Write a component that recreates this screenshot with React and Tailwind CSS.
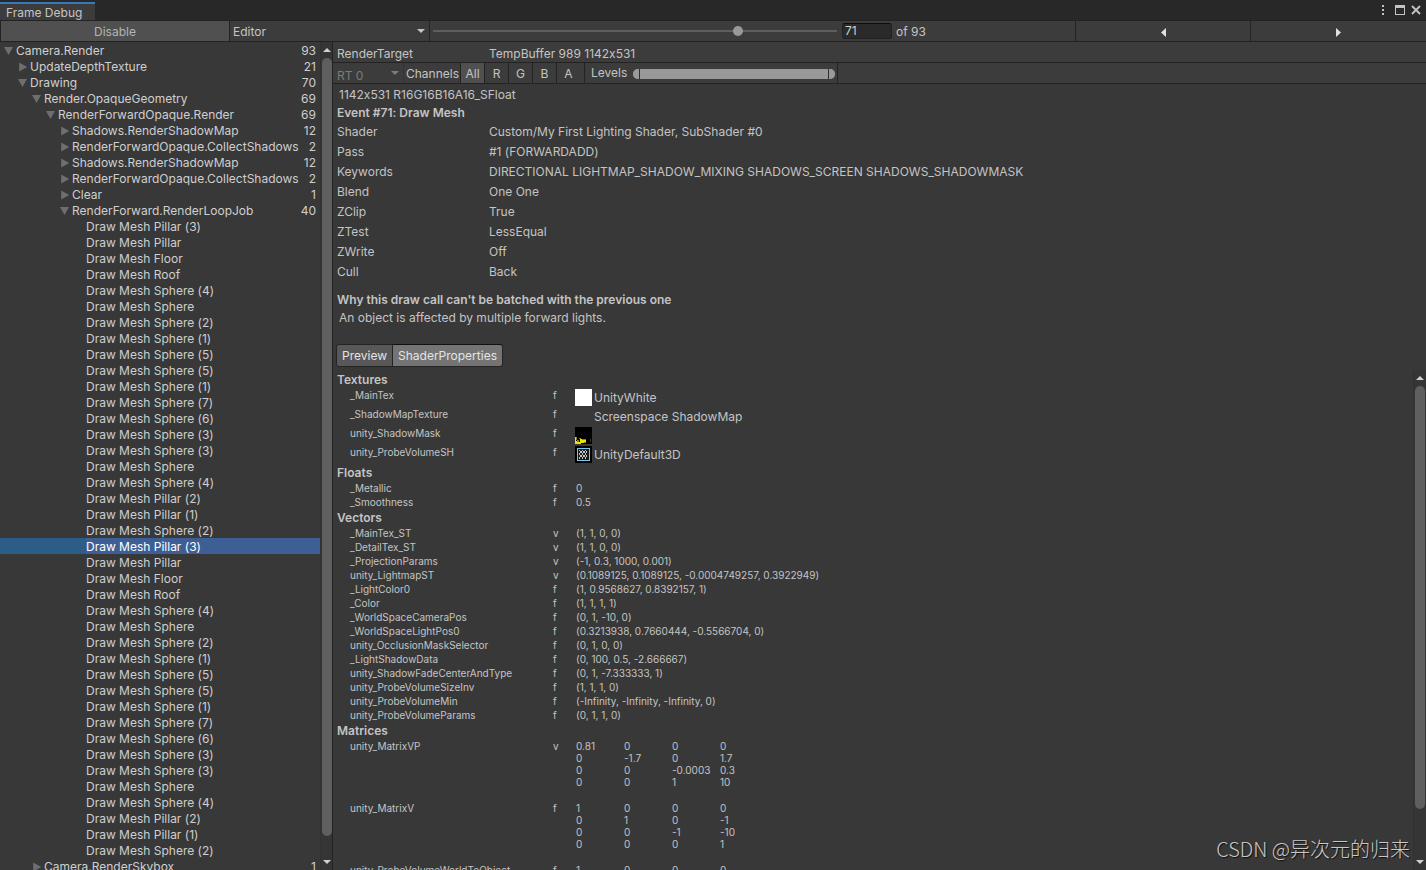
import { useState } from 'react'

const meshes = [
  'Pillar (3)', 'Pillar', 'Floor', 'Roof', 'Sphere (4)', 'Sphere', 'Sphere (2)', 'Sphere (1)',
  'Sphere (5)', 'Sphere (5)', 'Sphere (1)', 'Sphere (7)', 'Sphere (6)', 'Sphere (3)', 'Sphere (3)',
  'Sphere', 'Sphere (4)', 'Pillar (2)', 'Pillar (1)', 'Sphere (2)',
]

// every mesh is drawn twice, once per light
const draws = [...meshes, ...meshes].map(name => ({ depth: 5, label: `Draw Mesh ${name}` }))

const tree = [
  { depth: 0, label: 'Camera.Render', count: 93, open: true },
  { depth: 1, label: 'UpdateDepthTexture', count: 21, open: false },
  { depth: 1, label: 'Drawing', count: 70, open: true },
  { depth: 2, label: 'Render.OpaqueGeometry', count: 69, open: true },
  { depth: 3, label: 'RenderForwardOpaque.Render', count: 69, open: true },
  { depth: 4, label: 'Shadows.RenderShadowMap', count: 12, open: false },
  { depth: 4, label: 'RenderForwardOpaque.CollectShadows', count: 2, open: false },
  { depth: 4, label: 'Shadows.RenderShadowMap', count: 12, open: false },
  { depth: 4, label: 'RenderForwardOpaque.CollectShadows', count: 2, open: false },
  { depth: 4, label: 'Clear', count: 1, open: false },
  { depth: 4, label: 'RenderForward.RenderLoopJob', count: 40, open: true },
  ...draws,
  { depth: 2, label: 'Camera.RenderSkybox', count: 1, open: false },
]

const details = [
  ['Shader', 'Custom/My First Lighting Shader, SubShader #0'],
  ['Pass', '#1 (FORWARDADD)'],
  ['Keywords', 'DIRECTIONAL LIGHTMAP_SHADOW_MIXING SHADOWS_SCREEN SHADOWS_SHADOWMASK'],
  ['Blend', 'One One'],
  ['ZClip', 'True'],
  ['ZTest', 'LessEqual'],
  ['ZWrite', 'Off'],
  ['Cull', 'Back'],
]

const textures = [
  { name: '_MainTex', icon: 'white', value: 'UnityWhite' },
  { name: '_ShadowMapTexture', icon: 'none', value: 'Screenspace ShadowMap' },
  { name: 'unity_ShadowMask', icon: 'mask', value: '' },
  { name: 'unity_ProbeVolumeSH', icon: 'volume', value: 'UnityDefault3D' },
]

const floats = [
  ['_Metallic', 'f', '0'],
  ['_Smoothness', 'f', '0.5'],
]

const vectors = [
  ['_MainTex_ST', 'v', '(1, 1, 0, 0)'],
  ['_DetailTex_ST', 'v', '(1, 1, 0, 0)'],
  ['_ProjectionParams', 'v', '(-1, 0.3, 1000, 0.001)'],
  ['unity_LightmapST', 'v', '(0.1089125, 0.1089125, -0.0004749257, 0.3922949)'],
  ['_LightColor0', 'f', '(1, 0.9568627, 0.8392157, 1)'],
  ['_Color', 'f', '(1, 1, 1, 1)'],
  ['_WorldSpaceCameraPos', 'f', '(0, 1, -10, 0)'],
  ['_WorldSpaceLightPos0', 'f', '(0.3213938, 0.7660444, -0.5566704, 0)'],
  ['unity_OcclusionMaskSelector', 'f', '(0, 1, 0, 0)'],
  ['_LightShadowData', 'f', '(0, 100, 0.5, -2.666667)'],
  ['unity_ShadowFadeCenterAndType', 'f', '(0, 1, -7.333333, 1)'],
  ['unity_ProbeVolumeSizeInv', 'f', '(1, 1, 1, 0)'],
  ['unity_ProbeVolumeMin', 'f', '(-Infinity, -Infinity, -Infinity, 0)'],
  ['unity_ProbeVolumeParams', 'f', '(0, 1, 1, 0)'],
]

const matrices = [
  { name: 'unity_MatrixVP', type: 'v', cells: ['0.81', '0', '0', '0', '0', '-1.7', '0', '1.7', '0', '0', '-0.0003', '0.3', '0', '0', '1', '10'] },
  { name: 'unity_MatrixV', type: 'f', cells: ['1', '0', '0', '0', '0', '1', '0', '-1', '0', '0', '-1', '-10', '0', '0', '0', '1'] },
  { name: 'unity_ProbeVolumeWorldToObject', type: 'f', cells: ['1', '0', '0', '0'] },
]

function Caret({ className }) {
  return (
    <svg viewBox="0 0 8 4" className={`w-2 h-1 fill-current ${className}`} aria-hidden="true">
      <path d="M0 0h8L4 4z" />
    </svg>
  )
}

function Foldout({ open }) {
  return (
    <svg viewBox="0 0 14 16" className="w-3.5 h-4 shrink-0 fill-[#6e6e6e]" aria-hidden="true">
      {open ? <path d="M2 5h9l-4.5 8z" /> : <path d="M3.2 4.5v9l8-4.5z" />}
    </svg>
  )
}

function Scrollbar({ size, className }) {
  return (
    <div className={`flex flex-col shrink-0 pl-px bg-[#353535] border-l border-[#323232] ${className}`}>
      <div className="h-4 flex items-center justify-center text-[#d0d0d0]"><Caret className="rotate-180" /></div>
      <div className="flex-1 min-h-0">
        <div className="rounded-full bg-[#5f5f5f]" style={{ height: size }} />
      </div>
      <div className="h-4 flex items-center justify-center text-[#d0d0d0]"><Caret /></div>
    </div>
  )
}

function TextureIcon({ kind }) {
  if (kind === 'white') return <span className="size-[17px] bg-white" />
  if (kind === 'mask') {
    return (
      <svg viewBox="0 0 17 17" className="size-[17px]" aria-hidden="true">
        <rect width="17" height="17" fill="#000" />
        <path d="M0 10h1v4h1v1h3v-3h2v1h4v2H9v1H6v1H0z" fill="#e6e600" />
        <path d="M1 10h1v3H1zM4 11h2v1H4zM7 12h4v1H7zM9 15h2v1H9zM2 13h2v2H2z" fill="#8a8a00" />
        <path d="M15 12h1v3h-1z" fill="#3a3a00" />
      </svg>
    )
  }
  if (kind === 'volume') {
    return (
      <svg viewBox="0 0 17 17" className="size-[17px]" aria-hidden="true">
        <rect width="17" height="17" fill="#000" />
        <rect x="2.5" y="2.5" width="12" height="12" fill="#1a1a1a" stroke="#7cc4ec" />
        <path
          d="M4 4h1v1H4zM7 4h1v1H7zM10 4h1v1h-1zM5 5h2v2H5zM8 5h2v2H8zM11 5h1v2h-1zM4 7h1v2H4zM7 7h1v2H7zM10 7h1v2h-1zM5 9h2v2H5zM8 9h2v2H8zM11 9h1v2h-1zM4 11h1v2H4zM7 11h1v2H7zM10 11h1v2h-1z"
          fill="#c8c8c8"
        />
      </svg>
    )
  }
  return <span className="size-[17px]" />
}

function PropertyTable({ title, children }) {
  return (
    <table className="w-full table-fixed text-left text-[10px] leading-[14px]">
      <caption className="text-left pl-1 h-[17px] text-xs leading-[17px] font-semibold">{title}</caption>
      <colgroup>
        <col className="w-[220px]" />
        <col className="w-[23px]" />
        <col />
      </colgroup>
      <tbody>{children}</tbody>
    </table>
  )
}

function ValueRows({ rows }) {
  return rows.map(([name, type, value]) => (
    <tr key={name}>
      <th scope="row" className="pl-[17px] font-normal">{name}</th>
      <td>{type}</td>
      <td>{value}</td>
    </tr>
  ))
}

function TitleBar() {
  return (
    <header className="flex h-5 bg-[#282828]">
      <h1 className="mt-0.5 w-[95px] pl-1.5 border-t-2 border-[#3a79bb] bg-[#3c3c3c] leading-[18px]">Frame Debug</h1>
      <div className="ml-auto flex items-center gap-1.5 pr-[5px] text-[#c4c4c4]">
        <button aria-label="Menu" className="w-3 flex justify-center">
          <svg viewBox="0 0 2 10" className="w-0.5 h-2.5 fill-current"><path d="M0 0h2v2H0zM0 4h2v2H0zM0 8h2v2H0z" /></svg>
        </button>
        <button aria-label="Maximize">
          <svg viewBox="0 0 10 10" className="size-2.5 fill-current"><path d="M0 0h10v10H0zM1 3v6h8V3z" fillRule="evenodd" /></svg>
        </button>
        <button aria-label="Close">
          <svg viewBox="0 0 10 10" className="size-2.5 stroke-current"><path d="M1 1l8 8M9 1L1 9" strokeWidth="1.8" /></svg>
        </button>
      </div>
    </header>
  )
}

function Toolbar({ frame, setFrame }) {
  return (
    <div className="flex h-[22px] border-y border-[#232323] bg-[#3c3c3c]">
      <button className="w-[230px] pt-0.5 border-x border-[#232323] bg-[#505050] text-[#b4b4b4]">Disable</button>
      <div className="relative w-[200px] border-r border-[#232323]">
        <select aria-label="Connection" className="w-full h-full pt-0.5 pl-[3px] appearance-none outline-none">
          <option>Editor</option>
        </select>
        <Caret className="absolute right-1 top-2 pointer-events-none" />
      </div>
      <input
        type="range"
        aria-label="Event"
        min="1"
        max="93"
        value={frame}
        onChange={e => setFrame(Number(e.target.value))}
        className="w-[404px] ml-[3px] appearance-none bg-transparent
                   [&::-webkit-slider-runnable-track]:h-0.5 [&::-webkit-slider-runnable-track]:bg-[#5e5e5e]
                   [&::-webkit-slider-thumb]:appearance-none [&::-webkit-slider-thumb]:size-2.5 [&::-webkit-slider-thumb]:-mt-1
                   [&::-webkit-slider-thumb]:rounded-full [&::-webkit-slider-thumb]:bg-[#999999]"
      />
      <input
        type="text"
        id="event-number"
        value={frame}
        onChange={e => setFrame(Number(e.target.value) || 1)}
        className="ml-[5px] mt-0.5 w-[50px] h-4 px-0.5 rounded-[3px] border border-[#212121] border-t-[#0d0d0d] bg-[#2a2a2a] text-[#d2d2d2]"
      />
      <label htmlFor="event-number" className="ml-1 leading-[22px]">of 93</label>
      <button
        aria-label="Previous event"
        onClick={() => setFrame(Math.max(1, frame - 1))}
        className="ml-auto w-[175px] pt-0.5 flex items-center justify-center border-l border-[#232323]"
      >
        <svg viewBox="0 0 5 9" className="w-[5px] h-[9px] fill-[#e0e0e0]"><path d="M5 0v9L0 4.5z" /></svg>
      </button>
      <button
        aria-label="Next event"
        onClick={() => setFrame(Math.min(93, frame + 1))}
        className="w-44 pt-0.5 flex items-center justify-center border-l border-[#232323]"
      >
        <svg viewBox="0 0 5 9" className="w-[5px] h-[9px] fill-[#e0e0e0]"><path d="M0 0v9l5-4.5z" /></svg>
      </button>
    </div>
  )
}

function EventTree() {
  const [selected, setSelected] = useState(31)

  return (
    <ul role="tree" className="flex-1 min-w-0 overflow-hidden text-[#cfcfcf]">
      {tree.map((row, i) => (
        <li
          key={i}
          role="treeitem"
          aria-selected={i === selected}
          onClick={() => setSelected(i)}
          className={`flex h-4 leading-[18px] whitespace-nowrap ${i === selected ? 'bg-[#2c5d87] text-white' : ''}`}
          style={{ paddingLeft: 2 + row.depth * 14 }}
        >
          {row.count ? <Foldout open={row.open} /> : <span className="w-3.5" />}
          <span className={`flex-1 ${i === selected ? 'bg-[#3e5f96]' : ''}`}>{row.label}</span>
          {row.count && <span className="pr-1">{row.count}</span>}
        </li>
      ))}
    </ul>
  )
}

function ChannelBar() {
  const [channel, setChannel] = useState('All')
  const [levels, setLevels] = useState([0, 1])
  const rangeClass = "absolute inset-0 w-full h-full appearance-none bg-transparent pointer-events-none [&::-webkit-slider-thumb]:appearance-none [&::-webkit-slider-thumb]:pointer-events-auto [&::-webkit-slider-thumb]:w-[7px] [&::-webkit-slider-thumb]:h-2.5 [&::-webkit-slider-thumb]:bg-[#999999] [&::-webkit-slider-thumb]:border-[#303030]"

  return (
    <div className="flex h-[21px] border-b border-[#232323] bg-[#3c3c3c] leading-[22px]">
      <div className="relative w-[71px] border-r border-[#353535] text-[#7b7b7b]">
        <select aria-label="Render target" disabled className="w-full h-full pl-1 pt-0.5 appearance-none">
          <option>RT 0</option>
        </select>
        <Caret className="absolute right-1 top-2 pointer-events-none" />
      </div>
      <span className="w-14 pl-0.5">Channels</span>
      {['All', 'R', 'G', 'B', 'A'].map(name => (
        <button
          key={name}
          onClick={() => setChannel(name)}
          className={`w-6 border-l border-[#232323] ${channel === name ? 'bg-[#505050]' : ''}`}
        >
          {name}
        </button>
      ))}
      <div className="ml-1 flex items-center border-x border-[#232323] pl-1.5 pr-0.5">
        <span className="w-[42px]">Levels</span>
        <div className="relative mt-px w-[202px] h-2.5 rounded-full bg-[#999999]">
          <input
            type="range"
            aria-label="Black level"
            min="0"
            max="1"
            step="0.01"
            value={levels[0]}
            onChange={e => setLevels([Math.min(Number(e.target.value), levels[1]), levels[1]])}
            className={`${rangeClass} [&::-webkit-slider-thumb]:border-r [&::-webkit-slider-thumb]:rounded-l-full`}
          />
          <input
            type="range"
            aria-label="White level"
            min="0"
            max="1"
            step="0.01"
            value={levels[1]}
            onChange={e => setLevels([levels[0], Math.max(Number(e.target.value), levels[0])])}
            className={`${rangeClass} [&::-webkit-slider-thumb]:border-l [&::-webkit-slider-thumb]:rounded-r-full`}
          />
        </div>
      </div>
    </div>
  )
}

function ShaderProperties() {
  return (
    <div className="flex-1 min-w-0 overflow-hidden pt-px">
      <PropertyTable title="Textures">
        {textures.map(tex => (
          <tr key={tex.name} className="h-[19px] align-top">
            <th scope="row" className="pl-[17px] font-normal">{tex.name}</th>
            <td>f</td>
            <td>
              <div className="flex gap-0.5 -ml-px pt-px h-[19px] text-xs leading-[18px]">
                <TextureIcon kind={tex.icon} />
                {tex.value}
              </div>
            </td>
          </tr>
        ))}
      </PropertyTable>
      <PropertyTable title="Floats"><ValueRows rows={floats} /></PropertyTable>
      <PropertyTable title="Vectors"><ValueRows rows={vectors} /></PropertyTable>
      <PropertyTable title="Matrices">
        {matrices.map(m => (
          <tr key={m.name} className="h-[62px] align-top">
            <th scope="row" className="pl-[17px] font-normal">{m.name}</th>
            <td>{m.type}</td>
            <td>
              <div className="grid grid-cols-[repeat(4,48px)] pt-px leading-3">
                {m.cells.map((cell, i) => <span key={i}>{cell}</span>)}
              </div>
            </td>
          </tr>
        ))}
      </PropertyTable>
    </div>
  )
}

function EventDetails() {
  const [tab, setTab] = useState('ShaderProperties')

  return (
    <main className="flex-1 min-w-0 flex flex-col border-l border-[#232323]">
      <div className="grid grid-cols-[152px_1fr] h-[21px] pl-1 pt-0.5 border-b border-[#232323] bg-[#3c3c3c] leading-5">
        <span>RenderTarget</span>
        <span>TempBuffer 989 1142x531</span>
      </div>
      <ChannelBar />
      <div className="pl-1 pt-0.5 leading-[18px]">
        <p className="pl-0.5">1142x531 R16G16B16A16_SFloat</p>
        <h2 className="font-semibold">Event #71: Draw Mesh</h2>
        <dl className="grid grid-cols-[152px_1fr] leading-5">
          {details.map(([name, value]) => (
            <div key={name} className="contents">
              <dt>{name}</dt>
              <dd>{value}</dd>
            </div>
          ))}
        </dl>
        <h2 className="mt-[9px] font-semibold">Why this draw call can't be batched with the previous one</h2>
        <p className="pl-0.5">An object is affected by multiple forward lights.</p>
        <div className="mt-[17px] mb-[3px] flex text-[#e4e4e4]">
          {['Preview', 'ShaderProperties'].map(name => (
            <button
              key={name}
              onClick={() => setTab(name)}
              className={`h-[23px] px-[5px] -ml-px first:rounded-l-[3px] last:rounded-r-[3px] border border-[#242424]
                          ${tab === name ? 'bg-[#747474] border-t-[#111111]' : 'bg-[#585858]'}`}
            >
              {name}
            </button>
          ))}
        </div>
      </div>
      <div className="flex-1 min-h-0 flex">
        <ShaderProperties />
        <Scrollbar size="90.4%" className="w-[13px] pr-px" />
      </div>
    </main>
  )
}

function App() {
  const [frame, setFrame] = useState(71)

  return (
    <div className="relative h-screen flex flex-col overflow-hidden bg-[#383838] font-['Inter','Noto_Sans_CJK_SC',sans-serif] [font-feature-settings:'calt'_0] text-xs text-[#c4c4c4]">
      <TitleBar />
      <Toolbar frame={frame} setFrame={setFrame} />
      <div className="flex-1 min-h-0 flex">
        <aside className="w-[332px] flex">
          <EventTree />
          <Scrollbar size="97.8%" className="w-3" />
        </aside>
        <EventDetails />
      </div>
      <div className="absolute right-4 bottom-[7px] font-['Noto_Sans_CJK_SC',sans-serif] text-xl font-light text-[#c8c8c8] [text-shadow:1px_1px_1px_#111111]">
        CSDN @异次元的归来
      </div>
    </div>
  )
}

export default App
